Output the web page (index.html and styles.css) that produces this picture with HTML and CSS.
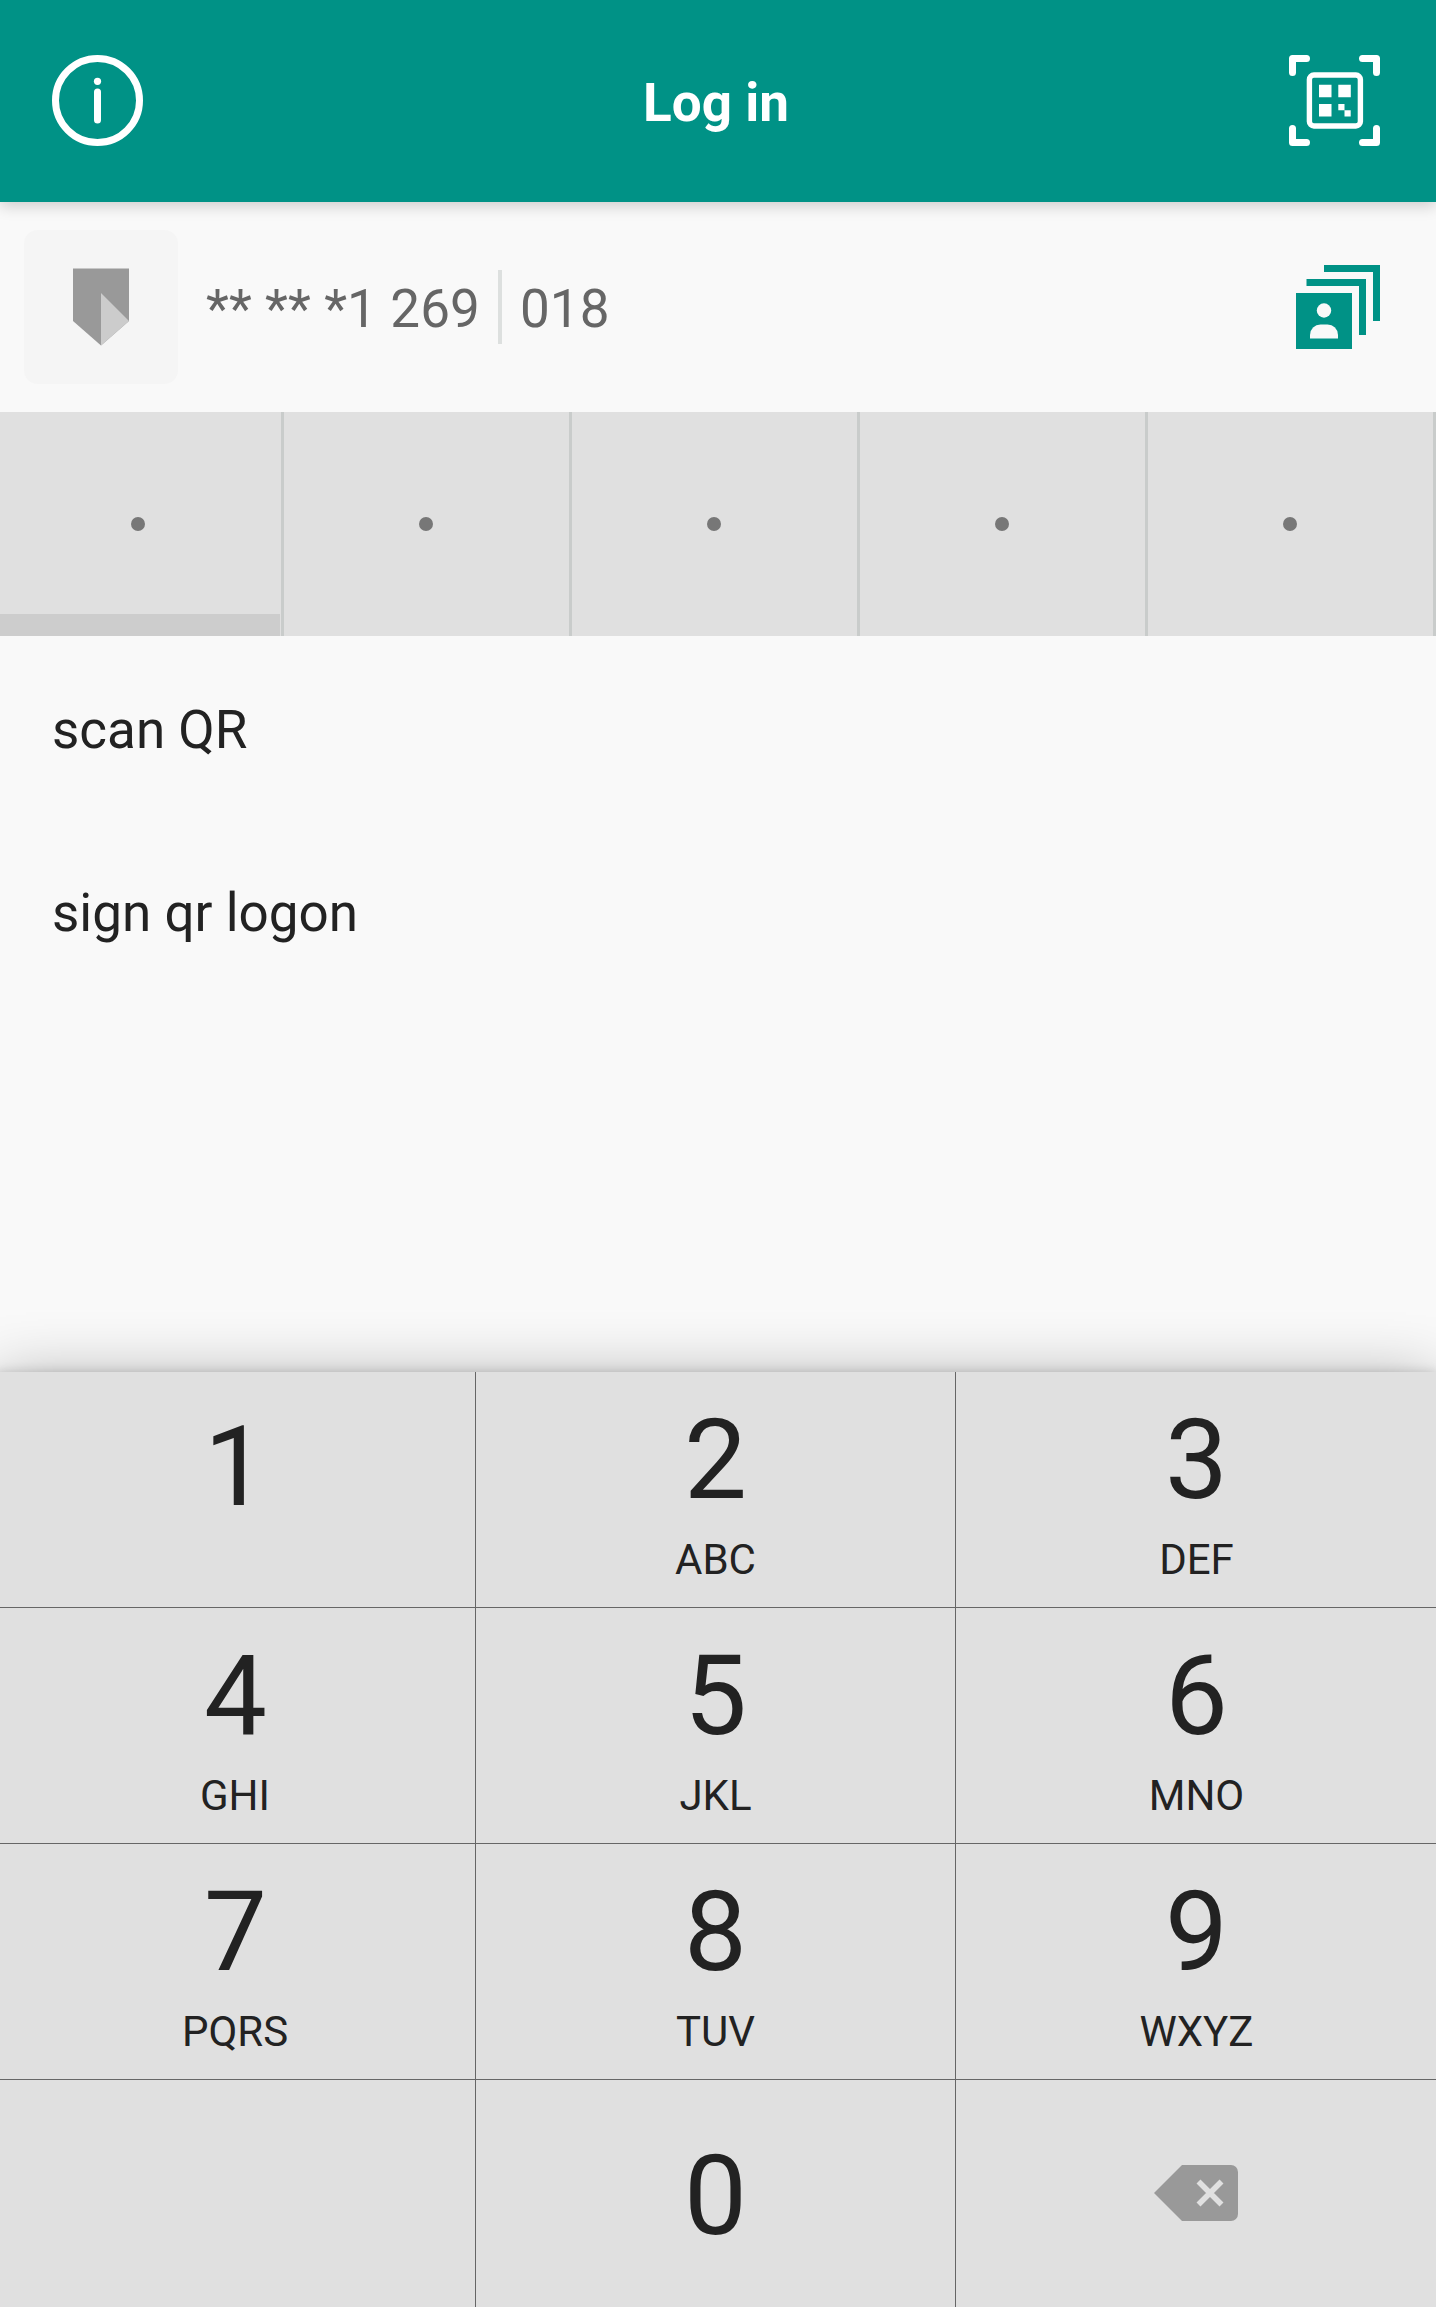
FILE: index.html
```html
<!DOCTYPE html>
<html lang="en">
<head>
<meta charset="utf-8">
<title>Log in</title>
<link rel="stylesheet" href="styles.css">
</head>
<body>
<div class="screen">
  <header class="app-bar">
    <svg class="bar-icon" viewBox="0 0 91 91" width="91" height="91">
      <circle cx="45.5" cy="45.5" r="42" fill="none" stroke="#fff" stroke-width="7"/>
      <circle cx="45.5" cy="26.3" r="3.6" fill="#fff"/>
      <path d="M45.5 37v28" stroke="#fff" stroke-width="7" stroke-linecap="round"/>
    </svg>
    <h1 class="title">Log in</h1>
    <svg class="bar-icon" viewBox="0 0 91 91" width="91" height="91">
      <path d="M3.5 17.5v-14h14M73.500 3.500h14v14M87.500 73.500v14h-14M17.500 87.500h-14v-14" fill="none" stroke="#fff" stroke-width="7" stroke-linecap="round" stroke-linejoin="round"/>
      <rect x="20.400" y="20" width="51" height="51" rx="4.500" fill="none" stroke="#fff" stroke-width="5.400"/>
      <path d="M30 29.700h12.500v12.500h-12.500zM49.300 29.700h12.500v12.500h-12.500zM30 49h12.500v12.500h-12.500zM49.300 49h6.200v6.200h-6.200zM55.500 55.200h6.200v6.200h-6.200z" fill="#fff"/>
    </svg>
  </header>

  <section class="account">
    <div class="logo">
      <svg viewBox="0 0 56 78" width="56" height="78">
        <path d="M0 .5h56v52.500l-28 24.500L0 53z" fill="#999"/>
        <path d="M28 25l28 28-28 24.500z" fill="#ccc"/>
      </svg>
    </div>
    <span class="account-number">** ** *1 269</span>
    <span class="separator"></span>
    <span class="card-number">018</span>
    <svg class="contacts" viewBox="0 0 84 84" width="84" height="84">
      <g fill="#009286">
        <path d="M28 0h56v56h-7V7H28z"/>
        <path d="M10.500 14H70v56h-7V21H10.500z"/>
        <path d="M0 28h56v56H0z"/>
      </g>
      <circle cx="28" cy="45.500" r="7.200" fill="#f9f9f9"/>
      <path d="M14 73.500v-3.500a10.500 10.500 0 0 1 10.500-10.500h7a10.500 10.500 0 0 1 10.500 10.500v3.500z" fill="#f9f9f9"/>
    </svg>
  </section>

  <div class="pin">
    <div class="pin-cell active"><i class="dot"></i></div>
    <div class="pin-cell"><i class="dot"></i></div>
    <div class="pin-cell"><i class="dot"></i></div>
    <div class="pin-cell"><i class="dot"></i></div>
    <div class="pin-cell"><i class="dot"></i></div>
  </div>

  <ul class="actions">
    <li>scan QR</li>
    <li>sign qr logon</li>
  </ul>

  <div class="keypad">
    <div class="key plain"><b>1</b></div>
    <div class="key"><b>2</b><small>ABC</small></div>
    <div class="key"><b>3</b><small>DEF</small></div>
    <div class="key"><b>4</b><small>GHI</small></div>
    <div class="key"><b>5</b><small>JKL</small></div>
    <div class="key"><b>6</b><small>MNO</small></div>
    <div class="key"><b>7</b><small>PQRS</small></div>
    <div class="key"><b>8</b><small>TUV</small></div>
    <div class="key"><b>9</b><small>WXYZ</small></div>
    <div class="key last"></div>
    <div class="key last"><b>0</b></div>
    <div class="key last">
      <svg viewBox="0 0 84 56" width="84" height="56">
        <path d="M28 0h49a7 7 0 0 1 7 7v42a7 7 0 0 1-7 7H28L0 28z" fill="#999"/>
        <path d="M44.500 16.500l23 23M67.500 16.500l-23 23" stroke="#e0e0e0" stroke-width="5.600"/>
      </svg>
    </div>
  </div>
</div>
</body>
</html>
```
FILE: styles.css
```css
* { box-sizing: border-box; }

body {
  margin: 0;
  background: #fff;
  font-family: Roboto, sans-serif;
}

.screen {
  display: flex;
  flex-direction: column;
  width: 1436px;
  height: 2307px;
  overflow: hidden;
  background: #f9f9f9;
  color: #222;
}

.app-bar {
  display: flex;
  justify-content: space-between;
  align-items: flex-start;
  flex: none;
  height: 202px;
  padding: 55px 56px 0 52px;
  background: #009286;
  box-shadow: 0 4px 14px rgba(0, 0, 0, .18);
}

.title {
  margin: 18px 0 0;
  font-size: 53px;
  line-height: 60px;
  font-weight: 700;
  color: #fff;
}

.account {
  display: flex;
  align-items: center;
  flex: none;
  height: 210px;
  padding: 0 56px 0 24px;
  font-size: 53px;
  line-height: 60px;
  color: #666;
}

.logo {
  display: flex;
  justify-content: center;
  padding-top: 37.5px;
  width: 154px;
  height: 154px;
  margin-right: 28px;
  border-radius: 14px;
  background: #f5f5f5;
}

.account-number,
.card-number { padding-top: 4px; white-space: pre; letter-spacing: .1px; }

.separator {
  width: 4px;
  height: 74px;
  margin: 0 18px;
  background: #dde0df;
}

.contacts { margin-left: auto; }

.pin {
  display: flex;
  flex: none;
  height: 224px;
  margin-left: -4px;
}

.pin-cell {
  display: flex;
  justify-content: center;
  width: 288px;
  padding-top: 105px;
  padding-right: 1px;
  border-right: 3px solid #c9cccb;
  background: #e0e0e0;
}

.pin-cell.active {
  background: linear-gradient(#cdcdcd, #cdcdcd) 0 100% / 284px 22px no-repeat #e0e0e0;
}

.dot {
  width: 14px;
  height: 14px;
  border-radius: 50%;
  background: #777;
}

.actions {
  flex: 1;
  margin: 0;
  padding: 2px 0 0 52px;
  list-style: none;
  font-size: 53px;
  line-height: 184px;
}

.actions li { height: 183px; }

.keypad {
  display: grid;
  grid-template-columns: repeat(3, 480px);
  grid-template-rows: repeat(3, 236px) 227px;
  flex: none;
  margin-left: -4px;
  background: #e0e0e0;
  box-shadow: 0 0 10px rgba(0, 0, 0, .16), 0 8px 60px rgba(0, 0, 0, .32);
}

.key {
  display: flex;
  flex-direction: column;
  align-items: center;
  gap: 20px;
  padding-top: 32px;
  border-right: 1px solid #666;
  border-bottom: 1px solid #666;
}

.key:nth-child(3n) { border-right: 0; }
.key:nth-child(3n) b,
.key:nth-child(3n) small { padding-left: 1px; }
.key:nth-child(3n + 1) small { padding-right: 1px; }
.key.plain { padding-top: 39px; }
.key.last { padding-top: 60px; border-bottom: 0; }
.key.last svg { margin-top: 25px; }

.key b {
  font-size: 112px;
  line-height: 112px;
  font-weight: 400;
}

.key small {
  font-size: 42px;
  line-height: 48px;
}
```
